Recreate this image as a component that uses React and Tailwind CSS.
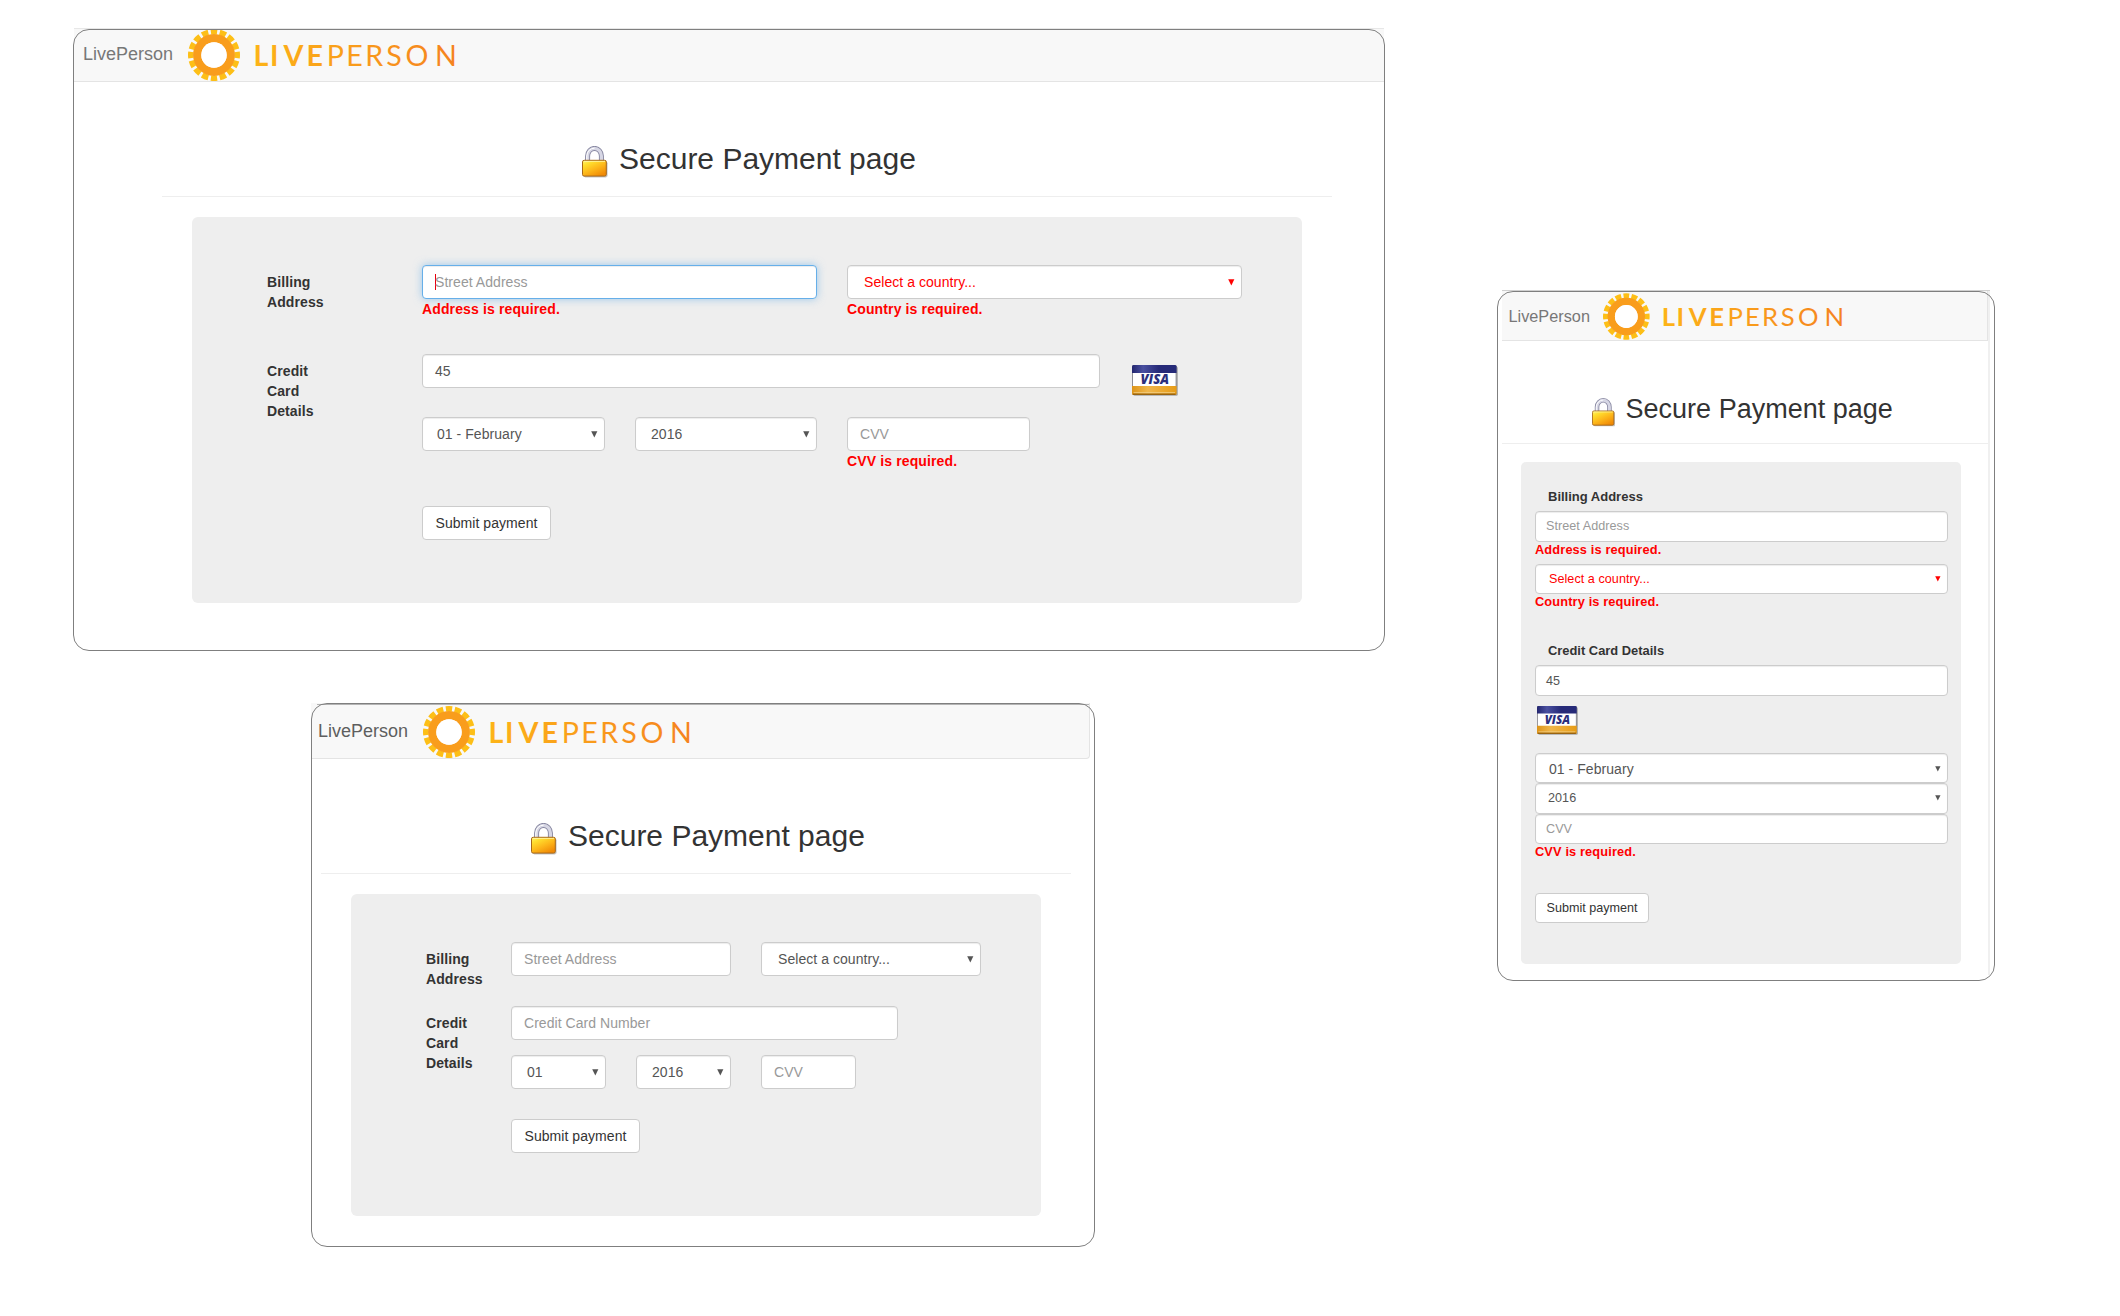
import React from "react";

const WORDMARK = [
  ["L", 65.6, 700], ["I", 82.0, 700], ["V", 95.6, 700], ["E", 118.4, 700],
  ["P", 138.8, 400], ["E", 158.2, 400], ["R", 177.2, 400], ["S", 198.2, 400],
  ["O", 217.4, 400], ["N", 247, 400],
];

function Logo({ id, className }) {
  return (
    <svg viewBox="0 0 272 52" className={className} aria-label="LIVEPERSON">
      <defs>
        <linearGradient id={id} gradientUnits="userSpaceOnUse" x1="66" y1="0" x2="270" y2="0">
          <stop offset="0" stopColor="#fdb417" />
          <stop offset="1" stopColor="#f5821f" />
        </linearGradient>
      </defs>
      <circle cx="26" cy="26" r="23.2" fill="none" stroke="#fdbf17" strokeWidth="5.6" pathLength="360" strokeDasharray="16 6.5" strokeDashoffset="8" />
      <circle cx="26" cy="26" r="16.8" fill="none" stroke="#f99d1c" strokeWidth="8.2" />
      <circle cx="26" cy="26" r="12.7" fill="#fff" />
      <g fill={`url(#${id})`} fontFamily="Lato, sans-serif" fontSize="28.6">
        {WORDMARK.map(([ch, x, w], i) => (
          <text key={i} x={x} y="36.6" fontWeight={w}>{ch}</text>
        ))}
      </g>
    </svg>
  );
}

function Lock({ id, className }) {
  return (
    <svg viewBox="0 0 26 32" className={className} aria-hidden="true">
      <defs>
        <linearGradient id={id} x1="0" y1="0" x2="0.7" y2="1">
          <stop offset="0" stopColor="#fff27a" />
          <stop offset="0.25" stopColor="#ffdf2e" />
          <stop offset="0.6" stopColor="#fdb71a" />
          <stop offset="1" stopColor="#f08a06" />
        </linearGradient>
      </defs>
      <path d="M5.6 16V10a6.9 7.6 0 0 1 13.8 0V16" fill="none" stroke="#85859f" strokeWidth="5" />
      <path d="M5.6 16V10a6.9 7.6 0 0 1 13.8 0V16" fill="none" stroke="#d6d6e4" strokeWidth="3.2" />
      <path d="M4.8 16V10a7.5 8 0 0 1 7.8-7.8" fill="none" stroke="#ffffff" strokeWidth="1" />
      <rect x="1.6" y="15.4" width="24" height="16" rx="1.8" fill="#000" opacity="0.22" />
      <rect x="0.5" y="14.3" width="23.8" height="15.8" rx="1.6" fill={`url(#${id})`} stroke="#a5671a" strokeWidth="1" />
      <path d="M1.8 15.4h21.2" stroke="#fff7b0" strokeWidth="0.8" />
    </svg>
  );
}

function Visa({ id, className }) {
  return (
    <svg viewBox="0 0 46 31" preserveAspectRatio="none" className={className} aria-label="VISA">
      <defs>
        <linearGradient id={`${id}-top`} x1="0" y1="0" x2="1" y2="0">
          <stop offset="0" stopColor="#23266f" />
          <stop offset="0.25" stopColor="#4a50a0" />
          <stop offset="0.6" stopColor="#262a78" />
          <stop offset="1" stopColor="#262a78" />
        </linearGradient>
        <linearGradient id={`${id}-low`} x1="0" y1="0" x2="1" y2="0">
          <stop offset="0" stopColor="#dd9418" />
          <stop offset="0.35" stopColor="#f0b64a" />
          <stop offset="1" stopColor="#e79c16" />
        </linearGradient>
      </defs>
      <rect x="1.4" y="1.4" width="44.4" height="29.4" rx="1.5" fill="#000" opacity="0.3" />
      <rect x="0" y="0" width="44.6" height="30" rx="1.5" fill="#8d8d94" />
      <rect x="1" y="7" width="42.6" height="15" fill="#fff" />
      <path d="M0 8V1.5Q0 0 1.5 0H43Q44.6 0 44.6 1.5V8Z" fill={`url(#${id}-top)`} />
      <path d="M0 21H44.6V28.5Q44.6 30 43 30H1.5Q0 30 0 28.5Z" fill={`url(#${id}-low)`} />
      <path d="M1 29.2H43.6" stroke="#9a6410" strokeWidth="1.6" />
      <path d="M1.6 27.6H43" stroke="#f3d08a" strokeWidth="0.8" />
      <text x="8.6" y="19.2" textLength="28.5" lengthAdjust="spacingAndGlyphs" fontFamily="Open Sans, sans-serif" fontWeight="800" fontStyle="italic" fontSize="14" fill="#2b2f7c">VISA</text>
    </svg>
  );
}

function Arrow({ className }) {
  return (
    <svg viewBox="0 0 7 7" className={className} aria-hidden="true">
      <path d="M0.2 0.2H6.4L3.3 6.4Z" fill="currentColor" />
    </svg>
  );
}

function Field({ className = "", children, arrow, arrowClass = "h-[7px] w-[7px]", focus }) {
  const frame = focus
    ? "border-[#66afe9] shadow-[inset_0_1px_1px_rgba(0,0,0,0.075),0_0_8px_rgba(102,175,233,0.6)]"
    : "border-[#ccc] shadow-[inset_0_1px_1px_rgba(0,0,0,0.075)]";
  return (
    <div className={`flex shrink-0 items-center justify-between rounded border bg-white pr-1.5 tracking-[0.05px] whitespace-nowrap ${frame} ${className}`}>
      <span className="flex items-center">
        {focus && <i className="-mr-px h-4 w-px bg-red-600" />}
        {children}
      </span>
      {arrow && <Arrow className={`shrink-0 ${arrowClass}`} />}
    </div>
  );
}

function Err({ className = "", children }) {
  return <div className={`font-bold tracking-[0.13px] whitespace-nowrap text-[#f00] ${className}`}>{children}</div>;
}

function Frame() {
  return <div className="pointer-events-none absolute inset-0 rounded-[16px] border border-[#7f7f7f]" />;
}

function WideCard() {
  return (
    <section className="relative ml-[73px] mt-[29px] h-[622px] w-[1312px]">
      <div className="absolute -top-px left-px h-px w-[1310px] bg-[#e7e7e7]" />
      <nav className="ml-px flex h-[53px] w-[1310px] border-b border-[#e4e4e4] bg-[#f8f8f8]">
        <span className="ml-[9px] mt-[15px] w-[105px] text-[18px] leading-5 text-[#777]">LivePerson</span>
        <Logo id="wm-wide" className="h-[52px] w-[272px]" />
      </nav>
      <header className="ml-[89px] mt-[60px] flex h-[55px] w-[1170px] border-b border-[#eee] pl-[420px]">
        <Lock id="lk-wide" className="mt-1 h-8 w-[26px]" />
        <h1 className="ml-[11px] text-[30px] leading-[33px] text-[#333]">Secure Payment page</h1>
      </header>
      <div className="ml-[119px] mt-5 h-[386px] w-[1110px] rounded-md bg-[#eee] pt-12 pl-[75px] text-[14px] leading-5">
        <div className="flex h-[89px]">
          <div className="w-[155px] pt-[7px] font-bold tracking-[0.1px] text-[#333]">Billing<br />Address</div>
          <div className="w-[425px]">
            <Field focus className="h-[34px] w-[395px] pl-3 text-[#999]">Street Address</Field>
            <Err>Address is required.</Err>
          </div>
          <div>
            <Field arrow className="h-[34px] w-[395px] pl-4 text-[#f00]">Select a country...</Field>
            <Err>Country is required.</Err>
          </div>
        </div>
        <div className="flex h-[152px]">
          <div className="w-[155px] pt-[7px] font-bold tracking-[0.1px] text-[#333]">Credit<br />Card<br />Details</div>
          <div>
            <div className="flex h-[63px]">
              <Field className="h-[34px] w-[678px] pl-3 text-[#555]">45</Field>
              <Visa id="v-wide" className="ml-8 mt-[11px] h-[31px] w-[46px]" />
            </div>
            <div className="flex">
              <Field arrow className="mr-[30px] h-[34px] w-[183px] pl-[14px] text-[#555]">01 - February</Field>
              <Field arrow className="mr-[30px] h-[34px] w-[182px] pl-[15px] text-[#555]">2016</Field>
              <div>
                <Field className="h-[34px] w-[183px] pl-3 text-[#999]">CVV</Field>
                <Err>CVV is required.</Err>
              </div>
            </div>
          </div>
        </div>
        <button className="ml-[155px] block h-[34px] w-[129px] rounded border border-[#ccc] bg-white text-center tracking-[0.05px] whitespace-nowrap text-[#333]">Submit payment</button>
      </div>
      <Frame />
    </section>
  );
}

function MediumCard() {
  return (
    <section className="relative ml-[311px] mt-[52px] h-[544px] w-[784px]">
      <div className="absolute top-px left-1.5 h-px w-[772px] bg-[#b4b4b4]" />
      <nav className="flex h-14 w-[779px] rounded-br border-r border-b border-[#e4e4e4] bg-[#f8f8f8]">
        <span className="ml-[7px] mt-[18px] w-[105px] text-[18px] leading-5 text-[#5e5e5e]">LivePerson</span>
        <Logo id="wm-med" className="mt-[3px] h-[52px] w-[272px]" />
      </nav>
      <header className="ml-[10px] mt-[60px] flex h-[55px] w-[750px] border-b border-[#eee] pl-[210px]">
        <Lock id="lk-med" className="mt-1 h-8 w-[26px]" />
        <h1 className="ml-[11px] text-[30px] leading-[33px] text-[#333]">Secure Payment page</h1>
      </header>
      <div className="ml-10 mt-5 h-[322px] w-[690px] rounded-md bg-[#eee] pt-12 pl-[75px] text-[14px] leading-5">
        <div className="flex h-16">
          <div className="w-[85px] pt-[7px] font-bold tracking-[0.1px] text-[#333]">Billing<br />Address</div>
          <Field className="mr-[30px] h-[34px] w-[220px] pl-3 text-[#999]">Street Address</Field>
          <Field arrow className="h-[34px] w-[220px] pl-4 text-[#555]">Select a country...</Field>
        </div>
        <div className="flex h-[113px]">
          <div className="w-[85px] pt-[7px] font-bold tracking-[0.1px] text-[#333]">Credit<br />Card<br />Details</div>
          <div>
            <Field className="h-[34px] w-[387px] pl-3 tracking-[0.1px] text-[#999]">Credit Card Number</Field>
            <div className="mt-[15px] flex gap-[30px]">
              <Field arrow className="h-[34px] w-[95px] pl-[15px] text-[#555]">01</Field>
              <Field arrow className="h-[34px] w-[95px] pl-[15px] text-[#555]">2016</Field>
              <Field className="h-[34px] w-[95px] pl-3 text-[#999]">CVV</Field>
            </div>
          </div>
        </div>
        <button className="ml-[85px] block h-[34px] w-[129px] rounded border border-[#ccc] bg-white text-center tracking-[0.05px] whitespace-nowrap text-[#333]">Submit payment</button>
      </div>
      <Frame />
    </section>
  );
}

function NarrowCard() {
  const small = "h-[6px] w-[6px]";
  return (
    <section className="relative ml-[112px] mt-[291px] h-[690px] w-[498px]">
      <div className="absolute -top-px left-[5px] h-px w-[488px] bg-[#d0d0d0]" />
      <div className="absolute top-0 left-[491px] h-[684px] w-0.5 bg-[#f0f0f0]" />
      <nav className="ml-[5px] flex h-[50px] w-[486px] border-r border-b border-[#e4e4e4] bg-[#f8f8f8]">
        <span className="ml-[6.5px] mt-[15px] w-[94.5px] text-[16.3px] leading-5 text-[#777]">LivePerson</span>
        <Logo id="wm-nar" className="mt-0.5 h-[47px] w-[244px]" />
      </nav>
      <header className="ml-[5px] mt-[52px] flex h-[51px] w-[486px] border-b border-[#eee] pl-[90px]">
        <Lock id="lk-nar" className="mt-[5px] h-[29px] w-[23.4px]" />
        <h1 className="ml-[10.2px] mt-px text-[27px] leading-[30px] text-[#333]">Secure Payment page</h1>
      </header>
      <div className="ml-6 mt-[18px] h-[502px] w-[440px] rounded-[5px] bg-[#eee] pt-[25px] pl-3.5 text-[12.6px] leading-[18px]">
        <div className="h-6 pt-[1px] pl-[13px] text-[13px] font-bold text-[#333]">Billing Address</div>
        <Field className="h-[31px] w-[413px] pb-0.5 pl-2.5 text-[#999]">Street Address</Field>
        <Err className="-mt-px h-[22px] text-[12.8px]">Address is required.</Err>
        <Field arrow arrowClass={small} className="mt-px h-[30px] w-[413px] pb-px pl-[13px] text-[#f00]">Select a country...</Field>
        <Err className="h-[47px] text-[12.8px] leading-4">Country is required.</Err>
        <div className="h-6 pt-px pl-[13px] text-[12.9px] font-bold text-[#333]">Credit Card Details</div>
        <Field className="h-[31px] w-[413px] pl-2.5 text-[#555]">45</Field>
        <Visa id="v-nar" className="ml-0.5 mt-[10px] h-[29px] w-[41px]" />
        <Field arrow arrowClass={small} className="mt-[18px] h-[30px] w-[413px] pt-0.5 pl-[13px] text-[14px] text-[#555]">01 - February</Field>
        <Field arrow arrowClass={small} className="h-[31px] w-[413px] pb-0.5 pl-3 text-[#555]">2016</Field>
        <Field className="h-[30px] w-[413px] pb-px pl-2.5 text-[#999]">CVV</Field>
        <Err className="h-[49px] text-[12.8px] leading-4">CVV is required.</Err>
        <button className="block h-[30px] w-[114px] rounded border border-[#ccc] bg-white pb-px text-center text-[12.6px] whitespace-nowrap text-[#333]">Submit payment</button>
      </div>
      <Frame />
    </section>
  );
}

export default function App() {
  return (
    <main className="flex h-[1316px] w-[2120px] overflow-hidden bg-white font-['Liberation_Sans',Arial,sans-serif]">
      <div className="w-[1385px] shrink-0">
        <WideCard />
        <MediumCard />
      </div>
      <NarrowCard />
    </main>
  );
}
